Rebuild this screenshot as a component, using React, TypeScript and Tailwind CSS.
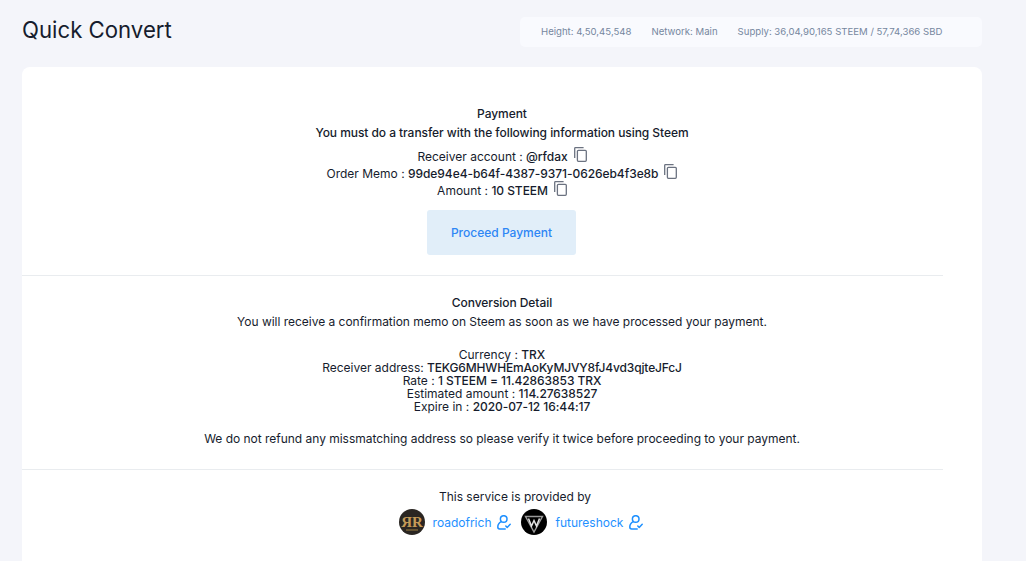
const Copy = ({ className = "" }: { className?: string }) => (
  <svg viewBox="0 0 13 15" className={"inline-block w-[13px] h-[15px] " + className} fill="none" stroke="#6b7280" strokeWidth="1.3">
    <path d="M.7 11V1.4a.7.7 0 0 1 .7-.7H9.6" />
    <rect x="3.4" y="3.3" width="8.9" height="11" rx="1" />
  </svg>
);

const UserCheck = () => (
  <svg viewBox="0 0 14 15" className="w-[14px] h-[15px] shrink-0" fill="none" stroke="#1e90ff" strokeWidth="1.5" strokeLinecap="round" strokeLinejoin="round">
    <circle cx="6.7" cy="4" r="3.3" />
    <path d="M4.4 6.6C2.2 7.6.8 9.4.8 12c0 1.1.7 1.9 1.8 1.9h5.6" />
    <path d="M8.8 11l1.4 1.4 3-3.1" />
  </svg>
);

const Rr = () => (
  <svg viewBox="0 0 26 26" className="w-[26px] h-[26px] shrink-0">
    <circle cx="13" cy="13" r="13" fill="#2a2622" />
    <text x="13" y="18" textAnchor="middle" fontFamily="'Liberation Serif',serif" fontWeight="700" fontSize="15" fill="#c49a57">ЯR</text>
    <path d="M7 21h12" stroke="#7d6638" strokeWidth="1.4" />
  </svg>
);

const Fs = () => (
  <svg viewBox="0 0 26 26" className="w-[26px] h-[26px] shrink-0">
    <circle cx="13" cy="13" r="13" fill="#000" />
    <path d="M4.5 7.5h17L13 23z" fill="none" stroke="#9a9a9a" strokeWidth="1.4" />
    <path d="M7.5 9.5l3 7.5 2.5-5.5 2.5 5.5 3-7.5" fill="none" stroke="#e2e2e2" strokeWidth="1.5" />
  </svg>
);

export default function App() {
  return (
    <div className="h-[561px] overflow-hidden bg-[#f4f5fa] pl-[22px] pr-[44px] font-['Inter',sans-serif] text-[12px] leading-[13px] text-[#161c2d]">
      <div className="flex h-[67px]">
        <h1 className="w-[498px] pt-[15px] text-[22.2px] leading-[30px] font-normal text-[#161c2d]">Quick Convert</h1>
        <div className="mt-[17px] flex h-[30px] w-[462px] items-center gap-[20px] rounded-[5px] bg-[#f9fafe] pb-[2px] pl-[21px] text-[9.6px] text-[#76879f]">
          <span>Height: 4,50,45,548</span>
          <span>Network: Main</span>
          <span>Supply: 36,04,90,165 STEEM / 57,74,366 SBD</span>
        </div>
      </div>

      <div className="h-[500px] rounded-t-[8px] bg-white text-center">
        <div className="h-[208px] pt-[40px]">
          <p className="leading-[14px] font-medium tracking-[-0.06px]">Payment</p>
          <p className="mt-[5px] leading-[14px] font-medium tracking-[-0.06px]">You must do a transfer with the following information using Steem</p>
          <div className="mt-[8px] flex flex-col items-center">
            <p className="h-[17px] leading-[17px]">Receiver account : <span className="font-medium tracking-[-0.06px]">@rfdax</span><Copy className="ml-[6px] -mt-[6px] align-middle" /></p>
            <p className="h-[17px] leading-[17px]">Order Memo : <span className="font-medium tracking-[-0.06px]">99de94e4-b64f-4387-9371-0626eb4f3e8b</span><Copy className="ml-[6px] -mt-[6px] align-middle" /></p>
            <p className="h-[17px] leading-[17px]">Amount : <span className="font-medium tracking-[-0.06px]">10 STEEM</span><Copy className="ml-[6px] -mt-[6px] align-middle" /></p>
          </div>
          <button className="mt-[11px] mr-[1px] h-[45px] w-[149px] rounded-[3px] bg-[#e1eef9] text-[12px] font-medium text-[#2e86f5]">Proceed Payment</button>
        </div>
        <div className="w-[921px] border-b border-[#e9ecef]" />

        <div className="h-[193px] pt-[20px]">
          <p className="leading-[14px] font-medium tracking-[-0.06px]">Conversion Detail</p>
          <p className="mt-[5px] leading-[14px] tracking-[-0.02px]">You will receive a confirmation memo on Steem as soon as we have processed your payment.</p>
          <div className="mt-[19px]">
            <p>Currency : <span className="font-medium">TRX</span></p>
            <p>Receiver address: <span className="font-medium tracking-[-0.15px]">TEKG6MHWHEmAoKyMJVY8fJ4vd3qjteJFcJ</span></p>
            <p>Rate : <span className="font-medium tracking-[-0.06px]">1 STEEM = 11.42863853 TRX</span></p>
            <p>Estimated amount : <span className="font-medium tracking-[-0.06px]">114.27638527</span></p>
            <p>Expire in : <span className="font-medium tracking-[-0.06px]">2020-07-12 16:44:17</span></p>
          </div>
          <p className="mt-[19px] leading-[14px] tracking-[-0.02px]">We do not refund any missmatching address so please verify it twice before proceeding to your payment.</p>
        </div>
        <div className="w-[921px] border-b border-[#e9ecef]" />

        <div className="pt-[20px]">
          <p className="pl-[26px] leading-[14px]">This service is provided by</p>
          <div className="mt-[5px] flex items-center justify-center pl-[38px] text-[#1e90ff]">
            <Rr />
            <span className="ml-[8px]">roadofrich</span>
            <span className="ml-[6px]"><UserCheck /></span>
            <span className="ml-[10px]"><Fs /></span>
            <span className="ml-[8px]">futureshock</span>
            <span className="ml-[6px]"><UserCheck /></span>
          </div>
        </div>
      </div>
    </div>
  );
}
